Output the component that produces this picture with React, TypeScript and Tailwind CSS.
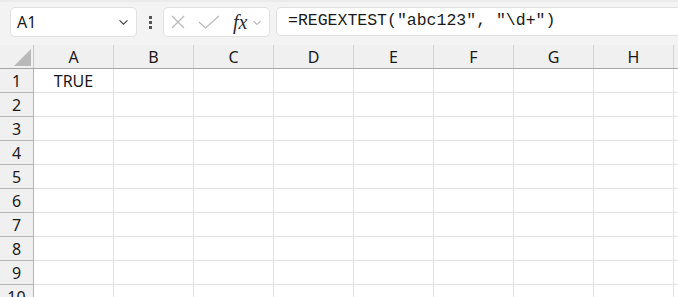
import React from "react";

const COLS = ["A", "B", "C", "D", "E", "F", "G", "H", ""];
const ROWS = [1, 2, 3, 4, 5, 6, 7, 8, 9, 10];

const uiFont = { fontFamily: '"Noto Sans", "Open Sans", Arial, sans-serif' };

function Chevron({ className }: { className?: string }) {
  return (
    <svg viewBox="0 0 12 8" className={className} fill="none" stroke="currentColor" strokeWidth="1.3">
      <path d="M1.5 1.5 L6 6 L10.5 1.5" />
    </svg>
  );
}

export default function App() {
  return (
    <div className="w-[678px] h-[297px] overflow-hidden bg-white text-[#1a1a1a]" style={uiFont}>
      {/* formula toolbar */}
      <div className="flex h-[45px] items-start border-t-[2px] border-[#ebebeb] bg-[#f3f3f3] pt-[5px] pl-[10px]">
        {/* name box */}
        <div className="flex h-[30px] w-[127px] items-center justify-between rounded-[5px] border border-[#e1e1e1] bg-white pl-[6px] pr-[7px] text-[16px]">
          <span>A1</span>
          <Chevron className="h-[7px] w-[11px] text-[#444]" />
        </div>
        {/* dots */}
        <div className="flex h-[30px] w-[26px] flex-col items-center justify-center gap-[2px]">
          <span className="h-[3px] w-[3px] bg-[#555]" />
          <span className="h-[3px] w-[3px] bg-[#555]" />
          <span className="h-[3px] w-[3px] bg-[#555]" />
        </div>
        {/* cancel / enter / fx */}
        <div className="flex h-[30px] w-[107px] items-center rounded-[5px] border border-[#e1e1e1] bg-white pl-[7px]">
          <svg viewBox="0 0 14 14" className="h-[14px] w-[14px]" fill="none" stroke="#b8b8b8" strokeWidth="1.2">
            <path d="M1 1 L13 13 M13 1 L1 13" />
          </svg>
          <svg viewBox="0 0 22 14" className="ml-[13px] h-[14px] w-[22px]" fill="none" stroke="#b8b8b8" strokeWidth="1.2">
            <path d="M1 7 L7.5 13 L21 1" />
          </svg>
          <span
            className="ml-[13px] text-[20px] italic leading-none text-[#2b2b2b]"
            style={{ fontFamily: '"Liberation Serif", "DejaVu Serif", serif' }}
          >
            fx
          </span>
          <Chevron className="ml-[5px] mt-[2px] h-[6px] w-[10px] text-[#8a8a8a]" />
        </div>
        {/* formula bar */}
        <div className="ml-[6px] flex h-[29px] flex-1 items-center rounded-l-[5px] border border-r-0 border-[#e1e1e1] bg-white pl-[11px]">
          <span
            className="whitespace-pre text-[16.5px] text-[#1a1a1a]"
            style={{ fontFamily: '"Liberation Mono", "DejaVu Sans Mono", monospace' }}
          >
            =REGEXTEST("abc123", "\d+")
          </span>
        </div>
      </div>

      {/* column headers */}
      <div className="flex h-[24px] border-b border-[#a6a6a6] bg-[#f0f0f0] text-[16px]">
        <div className="relative w-[34px] shrink-0 border-r border-[#c8c8c8]">
          <svg viewBox="0 0 17 17" className="absolute left-[14px] top-[4px] h-[17px] w-[17px]">
            <path d="M17 0 L17 17 L0 17 Z" fill="#b9b9b9" />
          </svg>
        </div>
        {COLS.map((c, i) => (
          <div
            key={i}
            className="flex w-[80px] shrink-0 items-center justify-center border-r border-[#d4d4d4]"
          >
            {c}
          </div>
        ))}
      </div>

      {/* rows */}
      {ROWS.map((r) => (
        <div key={r} className="flex h-[24px] text-[16px]">
          <div className="flex w-[34px] shrink-0 items-center justify-center border-b border-r border-[#b5b5b5] bg-[#f0f0f0]">
            {r}
          </div>
          {COLS.map((c, i) => (
            <div
              key={i}
              className="flex w-[80px] shrink-0 items-center justify-center border-b border-r border-[#e1e1e1]"
            >
              {r === 1 && c === "A" ? "TRUE" : ""}
            </div>
          ))}
        </div>
      ))}
    </div>
  );
}
